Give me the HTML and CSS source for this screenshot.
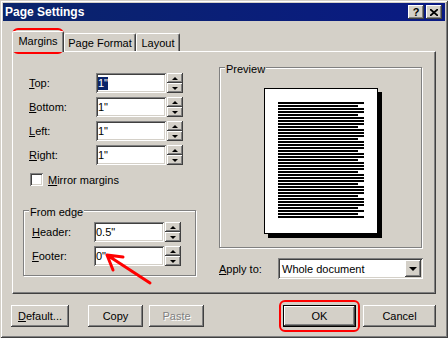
FILE: index.html
```html
<!DOCTYPE html>
<html lang="en">
<head>
    <meta charset="UTF-8">
    <title>Page Settings</title>
    <link rel="stylesheet" href="styles.css">
</head>
<body>
    <div class="window">
        <div class="titlebar">
            <span class="title">Page Settings</span>
            <div class="caption-buttons">
                <span class="caption-btn">?</span>
                <span class="caption-btn">
                    <svg width="8" height="7" viewBox="0 0 8 7"><path d="M0 0L8 7M8 0L0 7" stroke="#000" stroke-width="1.7"/></svg>
                </span>
            </div>
        </div>

        <!-- Tabs -->
        <div class="tabs">
            <div class="tab tab-active tab-margins">Margins</div>
            <div class="tab tab-format">Page Format</div>
            <div class="tab tab-layout">Layout</div>
        </div>

        <div class="pane">
            <div class="col-left">
                <div class="fields">
                    <div class="field-row">
                        <span class="field-label"><u>T</u>op:</span>
                        <div class="field"><span class="selected">1&quot;</span></div>
                        <div class="spin"><span class="spin-btn spin-up"></span><span class="spin-btn spin-down"></span></div>
                    </div>
                    <div class="field-row">
                        <span class="field-label"><u>B</u>ottom:</span>
                        <div class="field">1&quot;</div>
                        <div class="spin"><span class="spin-btn spin-up"></span><span class="spin-btn spin-down"></span></div>
                    </div>
                    <div class="field-row">
                        <span class="field-label"><u>L</u>eft:</span>
                        <div class="field">1&quot;</div>
                        <div class="spin"><span class="spin-btn spin-up"></span><span class="spin-btn spin-down"></span></div>
                    </div>
                    <div class="field-row">
                        <span class="field-label"><u>R</u>ight:</span>
                        <div class="field">1&quot;</div>
                        <div class="spin"><span class="spin-btn spin-up"></span><span class="spin-btn spin-down"></span></div>
                    </div>
                </div>

                <div class="check-row">
                    <span class="checkbox"></span>
                    <span><u>M</u>irror margins</span>
                </div>

                <fieldset class="group edge-group">
                    <legend>From edge</legend>
                    <div class="fields">
                        <div class="field-row">
                            <span class="field-label"><u>H</u>eader:</span>
                            <div class="field">0.5&quot;</div>
                            <div class="spin"><span class="spin-btn spin-up"></span><span class="spin-btn spin-down"></span></div>
                        </div>
                        <div class="field-row">
                            <span class="field-label"><u>F</u>ooter:</span>
                            <div class="field">0&quot;</div>
                            <div class="spin"><span class="spin-btn spin-up"></span><span class="spin-btn spin-down"></span></div>
                        </div>
                    </div>
                </fieldset>
            </div>

            <div class="col-right">
                <fieldset class="group preview-group">
                    <legend>Preview</legend>
                    <div class="page">
                        <svg class="page-lines" width="86" height="116" viewBox="0 0 86 116">
                            <path stroke="#000" stroke-width="2" shape-rendering="crispEdges"
                                d="M0 1h86M0 4h80M0 7h86M0 10h86M0 13h80M0 16h86M0 19h86M0 22h86M0 25h80M0 28h86M0 31h86M0 34h86M0 37h80M0 40h86M0 43h86M0 46h86M0 49h80M0 52h86M0 55h86M0 58h80M0 61h86M0 64h86M0 67h86M0 70h80M0 73h86M0 76h86M0 79h86M0 82h80M0 85h86M0 88h86M0 91h86M0 94h80M0 97h86M0 100h86M0 103h86M0 106h80M0 109h86M0 112h80M0 115h86"/>
                        </svg>
                    </div>
                </fieldset>
                <div class="apply-row">
                    <span class="apply-label"><u>A</u>pply to:</span>
                    <div class="combo">
                        <span class="combo-text">Whole document</span>
                        <span class="drop-btn"></span>
                    </div>
                </div>
            </div>
        </div>

        <div class="buttons">
            <button class="btn btn-defaults"><u>D</u>efault...</button>
            <button class="btn btn-copy">Copy</button>
            <button class="btn btn-paste" disabled>Paste</button>
            <button class="btn btn-ok">OK</button>
            <button class="btn btn-cancel">Cancel</button>
        </div>

        <!-- Red annotations -->
        <div class="mark mark-tab"></div>
        <div class="mark mark-ok"></div>
        <svg class="arrow" width="56" height="40" viewBox="0 0 56 40">
            <path d="M50 33L7 5M23 7L7 5L13 20" fill="none" stroke="#f00" stroke-width="3" stroke-linecap="round" stroke-linejoin="round"/>
        </svg>
    </div>
</body>
</html>
```

FILE: styles.css
```css
body {
    margin: 0;
    background-color: #d4d0c8;
    font-family: "Liberation Sans", Arial, sans-serif;
    font-size: 11px;
    color: #000000;
}
.window {
    position: relative;
    width: 448px;
    height: 338px;
    box-sizing: border-box;
    padding: 3px;
    display: flex;
    flex-direction: column;
    background-color: #d4d0c8;
    box-shadow: inset 1px 1px #d4d0c8, inset -1px -1px #404040, inset 2px 2px #ffffff, inset -2px -2px #808080;
}
.titlebar {
    height: 18px;
    display: flex;
    align-items: center;
    justify-content: space-between;
    padding: 0 3px 0 2px;
    background: linear-gradient(to right, #0a246a, #0a1a84);
    color: #ffffff;
}
.title {
    font-weight: bold;
    font-size: 12px;
}
.caption-buttons {
    display: flex;
    gap: 2px;
}
.caption-btn {
    width: 16px;
    height: 14px;
    box-sizing: border-box;
    display: flex;
    align-items: center;
    justify-content: center;
    background-color: #d4d0c8;
    color: #000000;
    font-weight: bold;
    font-size: 11px;
    box-shadow: inset -1px -1px #404040, inset 1px 1px #ffffff, inset -2px -2px #808080;
}

/* Tabs */
.tabs {
    position: relative;
    z-index: 1;
    height: 30px;
    display: flex;
    align-items: flex-end;
    padding-left: 9px;
}
.tab {
    height: 18px;
    box-sizing: border-box;
    display: flex;
    align-items: center;
    justify-content: center;
    border-top: 1px solid #ffffff;
    border-left: 1px solid #ffffff;
    border-right: 1px solid #404040;
    border-radius: 2px 2px 0 0;
    box-shadow: inset -1px 0 #808080;
}
.tab-active {
    height: 21px;
    margin-bottom: -1px;
    padding-bottom: 2px;
    background-color: #d4d0c8;
}
.tab-margins { width: 52px; }
.tab-format { width: 72px; }
.tab-layout { width: 44px; }

.pane {
    height: 243px;
    margin: 0 9px;
    box-sizing: border-box;
    display: flex;
    border: 1px solid;
    border-color: #ffffff #404040 #404040 #ffffff;
    box-shadow: inset -1px -1px #808080;
}
.col-left {
    width: 206px;
    padding-top: 21px;
}
.col-right {
    width: 204px;
    padding-top: 7px;
}

/* Spin fields */
.fields {
    display: flex;
    flex-direction: column;
    gap: 4px;
}
.field-row {
    display: flex;
    align-items: center;
    height: 20px;
    padding-left: 16px;
}
.field-label {
    width: 67px;
}
.field {
    width: 70px;
    height: 20px;
    box-sizing: border-box;
    display: flex;
    align-items: center;
    padding: 0 2px;
    background-color: #ffffff;
    box-shadow: inset 1px 1px #808080, inset -1px -1px #ffffff, inset 2px 2px #404040, inset -2px -2px #d4d0c8;
}
.selected {
    line-height: 13px;
    background-color: #0a246a;
    color: #ffffff;
}
.spin {
    display: flex;
    flex-direction: column;
    margin-left: 1px;
}
.spin-btn {
    width: 16px;
    height: 10px;
    box-sizing: border-box;
    display: flex;
    align-items: center;
    justify-content: center;
    background-color: #d4d0c8;
    box-shadow: inset -1px -1px #404040, inset 1px 1px #ffffff, inset -2px -2px #808080;
}
.spin-btn::after {
    content: "";
    border-left: 3px solid transparent;
    border-right: 3px solid transparent;
}
.spin-up::after {
    border-bottom: 3px solid #000000;
}
.spin-down::after {
    border-top: 3px solid #000000;
}

.check-row {
    display: flex;
    align-items: center;
    gap: 5px;
    height: 13px;
    margin-top: 8px;
    padding-left: 17px;
}
.checkbox {
    width: 13px;
    height: 13px;
    box-sizing: border-box;
    background-color: #ffffff;
    box-shadow: inset 1px 1px #808080, inset -1px -1px #ffffff, inset 2px 2px #404040, inset -2px -2px #d4d0c8;
}

/* Group boxes */
.group {
    margin: 0;
    padding: 0;
    min-width: 0;
    box-sizing: border-box;
    border: 1px solid #808080;
    box-shadow: inset 1px 1px #ffffff, 1px 1px #ffffff;
}
.group legend {
    margin-left: 5px;
    padding: 4px 1px 0;
    line-height: 12px;
    background-color: #d4d0c8;
}
.edge-group {
    width: 173px;
    margin: 16px 0 0 10px;
    padding: 4px 0 9px;
}
.edge-group .field-row {
    padding-left: 8px;
}
.edge-group .field-label {
    width: 62px;
}
.preview-group {
    width: 203px;
    padding-bottom: 13px;
}
.page {
    width: 114px;
    height: 146px;
    box-sizing: border-box;
    margin: 13px 0 0 44px;
    padding: 13px 0 0 13px;
    background-color: #ffffff;
    border: 1px solid #000000;
    box-shadow: 4px 4px 0 #000000;
}
.page-lines {
    display: block;
}

.apply-row {
    display: flex;
    align-items: center;
    margin-top: 10px;
}
.apply-label {
    width: 59px;
}
.combo {
    width: 145px;
    height: 21px;
    box-sizing: border-box;
    display: flex;
    padding: 2px;
    background-color: #ffffff;
    box-shadow: inset 1px 1px #808080, inset -1px -1px #ffffff, inset 2px 2px #404040, inset -2px -2px #d4d0c8;
}
.combo-text {
    flex: 1;
    display: flex;
    align-items: center;
    padding-left: 2px;
}
.drop-btn {
    width: 16px;
    height: 17px;
    box-sizing: border-box;
    display: flex;
    align-items: center;
    justify-content: center;
    background-color: #d4d0c8;
    box-shadow: inset -1px -1px #404040, inset 1px 1px #ffffff, inset -2px -2px #808080;
}
.drop-btn::after {
    content: "";
    border-left: 4px solid transparent;
    border-right: 4px solid transparent;
    border-top: 4px solid #000000;
}

/* Dialog buttons */
.buttons {
    display: flex;
    height: 22px;
    margin-top: 11px;
    padding-left: 8px;
}
.btn {
    height: 22px;
    box-sizing: border-box;
    padding: 0;
    border: none;
    font: inherit;
    color: #000000;
    background-color: #d4d0c8;
    box-shadow: inset -1px -1px #404040, inset 1px 1px #ffffff, inset -2px -2px #808080;
}
.btn-defaults { width: 58px; }
.btn-copy { width: 55px; margin-left: 19px; }
.btn-paste {
    width: 55px;
    margin-left: 6px;
    color: #808080;
    text-shadow: 1px 1px #ffffff;
}
.btn-ok {
    width: 73px;
    margin-left: 79px;
    border: 1px solid #000000;
}
.btn-cancel { width: 73px; margin-left: 7px; }

/* Red markings drawn over the dialog */
.mark {
    position: absolute;
    box-sizing: border-box;
    border: 2px solid #ff0000;
    border-radius: 6px;
}
.mark-tab {
    left: 12px;
    top: 28px;
    width: 52px;
    height: 26px;
}
.mark-ok {
    left: 279px;
    top: 300px;
    width: 81px;
    height: 32px;
}
.arrow {
    position: absolute;
    left: 100px;
    top: 250px;
}
```
